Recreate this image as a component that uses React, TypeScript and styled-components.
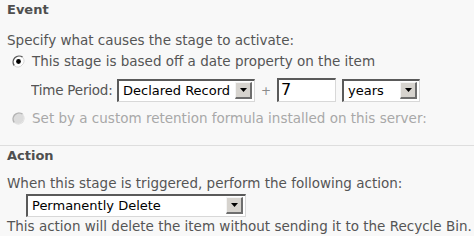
import styled, { createGlobalStyle } from "styled-components";

const GlobalStyle = createGlobalStyle`
	html, body {
		margin: 0;
		padding: 0;
		background: #f8f8f8;
	}
	body {
		font-family: "DejaVu Sans", Verdana, sans-serif;
		font-size: 13.5px;
		color: #555555;
		overflow: hidden;
	}
`;

const Page = styled.div`
	width: 474px;
	height: 236px;
	overflow: hidden;
	white-space: nowrap;
`;

const Section = styled.section<{ $divided?: boolean }>`
	padding: 2px 0 0 7px;
	border-top: ${(p) => (p.$divided ? "1px solid #dedede" : "none")};
`;

const Heading = styled.div`
	font-weight: bold;
	font-size: 13px;
	line-height: 15px;
	color: #4f4f4f;
`;

const Line = styled.div<{ $top: number }>`
	margin-top: ${(p) => p.$top}px;
	line-height: 16px;
`;

const OptionRow = styled.label<{ $top: number; $disabled?: boolean }>`
	display: flex;
	align-items: center;
	gap: 7px;
	margin-top: ${(p) => p.$top}px;
	padding-left: 5px;
	height: 16px;
	color: ${(p) => (p.$disabled ? "#a8a8a8" : "#555555")};
`;

const FieldRow = styled.div<{ $top: number; $indent: number }>`
	display: flex;
	align-items: center;
	margin-top: ${(p) => p.$top}px;
	padding-left: ${(p) => p.$indent}px;
	height: 24px;
`;

const FieldLabel = styled.span`
	width: 86px;
	flex: none;
	overflow: hidden;
	letter-spacing: -0.2px;
`;

const SelectBox = styled.div<{ $width: number }>`
	box-sizing: border-box;
	display: flex;
	align-items: center;
	width: ${(p) => p.$width}px;
	height: 23px;
	background: #ffffff;
	border-style: solid;
	border-width: 2px 1px 1px 2px;
	border-color: #5a5a5a #d8d8d8 #d8d8d8 #5a5a5a;
	padding: 0 2px 0 4px;
	font-size: 13px;
	color: #000000;
`;

const SelectText = styled.span`
	flex: 1;
	overflow: hidden;
`;

const DropButton = styled.span`
	box-sizing: border-box;
	display: flex;
	align-items: center;
	justify-content: center;
	width: 17px;
	height: 17px;
	background: #d6d3ce;
	border-style: solid;
	border-width: 1px 2px 2px 1px;
	border-color: #f4f4f4 #6e6e6e #6e6e6e #f4f4f4;
`;

const Plus = styled.span`
	margin: 2px 6px 0 6px;
	color: #8a8a8a;
	font-size: 12px;
`;

const TextBox = styled.div`
	box-sizing: border-box;
	width: 59px;
	height: 24px;
	margin-right: 6px;
	background: #ffffff;
	border-style: solid;
	border-width: 2px 1px 1px 2px;
	border-color: #5a5a5a #d8d8d8 #d8d8d8 #5a5a5a;
	padding: 0 2px;
	font-size: 16px;
	line-height: 20px;
	color: #000000;
`;

const Spacer = styled.div<{ $height: number }>`
	height: ${(p) => p.$height}px;
`;

const Arrow = () => (
	<svg width="7" height="4" viewBox="0 0 7 4">
		<path d="M0 0h7L3.5 4z" fill="#000" />
	</svg>
);

const Select = ({ value, width }: { value: string; width: number }) => (
	<SelectBox $width={width}>
		<SelectText>{value}</SelectText>
		<DropButton>
			<Arrow />
		</DropButton>
	</SelectBox>
);

const Radio = ({ checked, disabled }: { checked?: boolean; disabled?: boolean }) => (
	<svg width="13" height="13" viewBox="0 0 13 13">
		<circle cx="6.5" cy="6.5" r="6" fill={disabled ? "#dcdcdc" : "#ffffff"} />
		<path
			d="M2.3 10.7A6 6 0 0 1 10.7 2.3"
			fill="none"
			stroke={disabled ? "#b4b4b4" : "#5c5c5c"}
			strokeWidth="1.4"
		/>
		<path
			d="M10.7 2.3A6 6 0 0 1 2.3 10.7"
			fill="none"
			stroke={disabled ? "#e6e6e6" : "#d4d4d4"}
			strokeWidth="1"
		/>
		{checked && <circle cx="6.5" cy="6.5" r="2.4" fill="#000" />}
	</svg>
);

const App = () => {
	return (
		<>
			<GlobalStyle />
			<Page>
				<Section>
					<Heading>Event</Heading>
					<Line $top={15}>Specify what causes the stage to activate:</Line>
					<OptionRow $top={5}>
						<Radio checked />
						This stage is based off a date property on the item
					</OptionRow>
					<FieldRow $top={9} $indent={24}>
						<FieldLabel>Time Period:</FieldLabel>
						<Select value="Declared Record" width={138} />
						<Plus>+</Plus>
						<TextBox>7</TextBox>
						<Select value="years" width={78} />
					</FieldRow>
					<OptionRow $top={8} $disabled>
						<Radio disabled />
						Set by a custom retention formula installed on this server:
					</OptionRow>
					<Spacer $height={19} />
				</Section>
				<Section $divided>
					<Heading>Action</Heading>
					<Line $top={12}>When this stage is triggered, perform the following action:</Line>
					<FieldRow $top={2} $indent={19}>
						<Select value="Permanently Delete" width={220} />
					</FieldRow>
					<Line $top={1}>This action will delete the item without sending it to the Recycle Bin.</Line>
				</Section>
			</Page>
		</>
	);
};

export default App;
